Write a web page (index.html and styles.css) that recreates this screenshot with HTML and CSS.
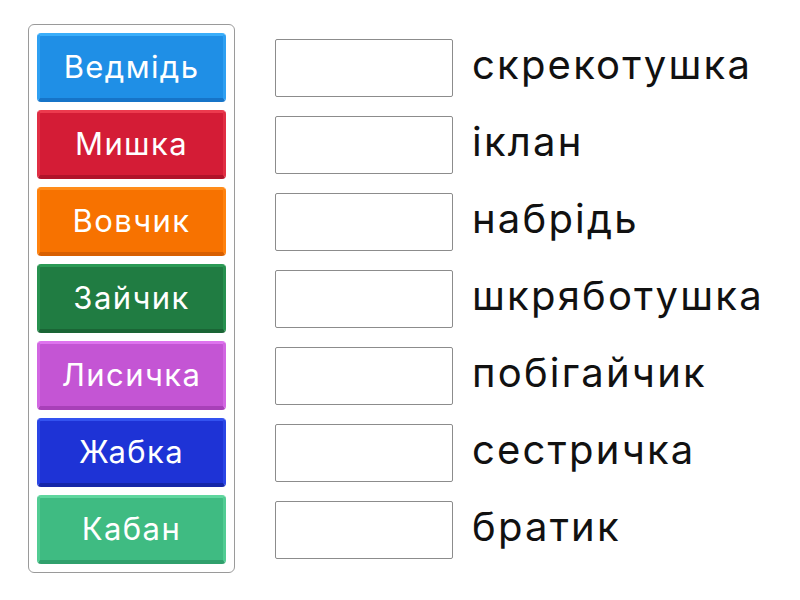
FILE: index.html
```html
<!DOCTYPE html>
<html lang="uk">
<head>
<meta charset="utf-8">
<link rel="stylesheet" href="styles.css">
</head>
<body>
<div class="page">
  <div class="panel">
    <div class="tile blue">Ведмідь</div>
    <div class="tile red">Мишка</div>
    <div class="tile orange">Вовчик</div>
    <div class="tile green">Зайчик</div>
    <div class="tile purple">Лисичка</div>
    <div class="tile navy">Жабка</div>
    <div class="tile mint">Кабан</div>
  </div>
  <div class="rows">
    <div class="row"><div class="slot"></div><span class="word">скрекотушка</span></div>
    <div class="row"><div class="slot"></div><span class="word">іклан</span></div>
    <div class="row"><div class="slot"></div><span class="word">набрідь</span></div>
    <div class="row"><div class="slot"></div><span class="word">шкряботушка</span></div>
    <div class="row"><div class="slot"></div><span class="word">побігайчик</span></div>
    <div class="row"><div class="slot"></div><span class="word">сестричка</span></div>
    <div class="row"><div class="slot"></div><span class="word">братик</span></div>
  </div>
</div>
</body>
</html>
```
FILE: styles.css
```css
html, body {
  margin: 0;
  padding: 0;
  background: #ffffff;
  font-family: Inter, "Noto Sans", sans-serif;
}
.page {
  display: flex;
  align-items: flex-start;
  padding: 24px 0 0 28px;
}
.panel {
  display: flex;
  flex-direction: column;
  gap: 8px;
  padding: 8px;
  border: 1px solid #9a9a9a;
  border-radius: 6px;
}
.tile {
  box-sizing: border-box;
  width: 189px;
  height: 69px;
  display: flex;
  align-items: center;
  justify-content: center;
  color: #ffffff;
  font-size: 31px;
  letter-spacing: 0.045em;
  padding-bottom: 2px;
  border-radius: 4px;
  border: 3px solid;
  border-bottom-width: 4px;
}
.blue { background: #1f8fe6; border-color: #3aaefa #2fa0f2 #1674c8 #2fa0f2; }
.red { background: #d41c36; border-color: #ec3a4e #e12e44 #b0132a #e12e44; }
.orange { background: #f77200; border-color: #ff8c1a #ff820e #d85f00 #ff820e; }
.green { background: #207c42; border-color: #2b9a55 #27914f #1a6535 #27914f; }
.purple { background: #c455d4; border-color: #de73ee #d267e2 #a840b8 #d267e2; }
.navy { background: #1e33d6; border-color: #3352f0 #2a46e6 #1526a8 #2a46e6; }
.mint { background: #3fbb82; border-color: #5fd69e #52cc93 #30a06c #52cc93; }
.rows {
  display: flex;
  flex-direction: column;
  gap: 19px;
  margin-left: 40px;
  margin-top: 15px;
}
.row {
  display: flex;
  align-items: center;
  gap: 19px;
  height: 58px;
}
.slot {
  box-sizing: border-box;
  flex: none;
  width: 178px;
  height: 58px;
  border: 1px solid #8c8c8c;
  border-radius: 2px;
  background: #ffffff;
}
.word {
  font-size: 40px;
  letter-spacing: 0.055em;
  color: #111111;
  line-height: 1;
  padding-bottom: 6px;
}
```
